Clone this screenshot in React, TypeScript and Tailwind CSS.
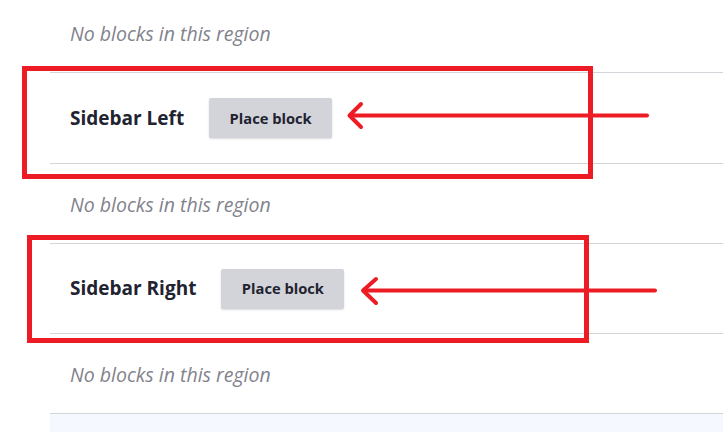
import React from "react";

function EmptyRow() {
  return (
    <div className="h-[80px] flex items-center pl-5 pt-[2px] border-b border-[#d3d4d9]">
      <span className="italic text-[19.5px] text-[#82828c]">No blocks in this region</span>
    </div>
  );
}

function HeadingRow({ title, tall }: { title: string; tall?: boolean }) {
  return (
    <div
      className={
        tall
          ? "h-[91px] flex items-center pl-5 border-b border-[#d3d4d9]"
          : "h-[90px] flex items-center pl-5 border-b border-[#d3d4d9]"
      }
    >
      <h2 className="text-[19px] font-bold text-[#222330] mr-[25px]">{title}</h2>
      <button className="h-[40px] w-[123px] rounded-[2px] bg-[#d3d4d9] shadow-[0_1px_2px_rgba(0,0,0,0.15)] text-[14.7px] font-bold text-[#222330]">
        Place block
      </button>
    </div>
  );
}

export default function App() {
  return (
    <div className="relative w-[723px] h-[432px] overflow-hidden bg-white font-['Open_Sans',sans-serif]">
      <div className="ml-[50px] -mt-[7px]">
        <EmptyRow />
        <HeadingRow title="Sidebar Left" tall />
        <EmptyRow />
        <HeadingRow title="Sidebar Right" />
        <EmptyRow />
        <div className="h-[40px] bg-[#f5f8fe]" />
      </div>

      <div className="absolute left-[22px] top-[66px] w-[571px] h-[113px] border-[5px] border-[#ed1c24]" />
      <div className="absolute left-[27px] top-[235px] w-[562px] h-[108px] border-[5px] border-[#ed1c24]" />

      <svg className="absolute left-0 top-0" width="723" height="432" viewBox="0 0 723 432">
        <g stroke="#ed1c24" strokeWidth="4" strokeLinecap="round" strokeLinejoin="round" fill="none">
          <path d="M350 115.5 H647" />
          <path d="M361 104 L349.5 115.5 L361 127" />
          <path d="M364 290.5 H655" />
          <path d="M376 279 L363 290.5 L376 303" />
        </g>
      </svg>
    </div>
  );
}
